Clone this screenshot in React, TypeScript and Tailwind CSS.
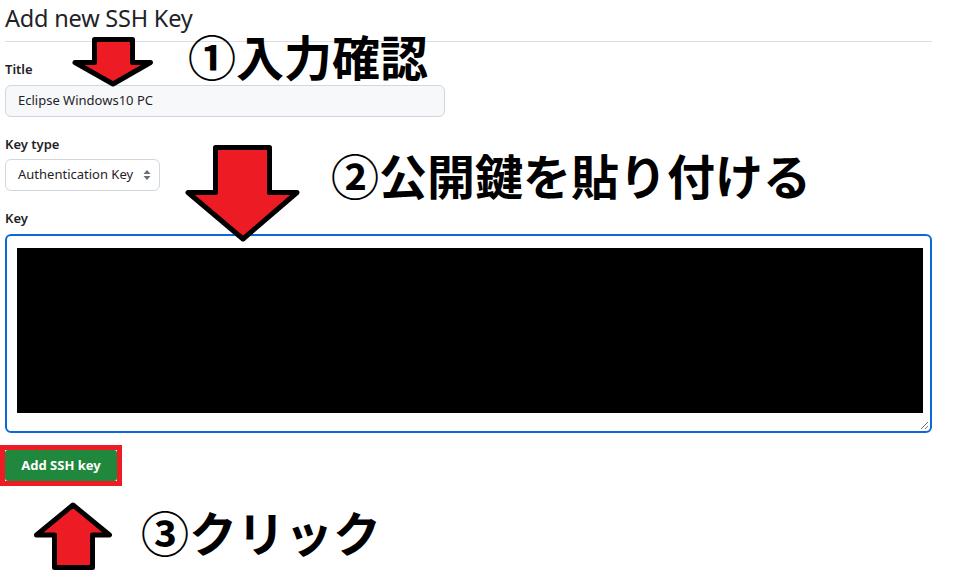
import React from "react";

function SortIcon() {
  return (
    <svg width="8" height="12" viewBox="0 0 8 12" className="ml-[10px]">
      <path d="M4 1 L7.5 5 H0.5 Z" fill="#656d76" />
      <path d="M4 11 L7.5 7 H0.5 Z" fill="#656d76" />
    </svg>
  );
}

function Arrows() {
  // 注釈の矢印 (ペイントで描いたような赤い矢印)
  return (
    <svg
      className="absolute inset-0 pointer-events-none"
      width="958"
      height="583"
      viewBox="0 0 958 583"
    >
      <g fill="#ed1c24" stroke="#000" strokeWidth="5" strokeLinejoin="round">
        <polygon points="94.5,39.5 132.5,39.5 132.5,62.5 150.5,62.5 113,84 75,62.5 94.5,62.5" />
        <polygon points="215.5,147.5 269.5,147.5 269.5,192.5 297,192.5 243,239 188,192.5 215.5,192.5" />
        <polygon points="73,505 109.5,535 92.5,535 92.5,567.5 54.5,567.5 54.5,535 36.5,535" />
      </g>
    </svg>
  );
}

const noteFont = { fontFamily: '"Noto Sans CJK JP", sans-serif' };

export default function App() {
  return (
    <div
      className="relative w-[958px] h-[583px] bg-white overflow-hidden text-[#1f2328]"
      style={{ fontFamily: '"Noto Sans", "Noto Sans CJK JP", sans-serif' }}
    >
      <div className="w-[927px] ml-[5px] flex flex-col">
        <h2 className="text-[23.5px] leading-[36px] font-normal pb-[5px] border-b border-[#d8dee4] tracking-[-0.2px]">
          Add new SSH Key
        </h2>

        <label className="mt-[17px] text-[13px] leading-[20px] font-semibold">Title</label>
        <div className="mt-[6px] w-[440px] h-[32px] rounded-[6px] border border-[#d0d7de] bg-[#f6f8fa] flex items-center px-[12px] text-[13px]">
          Eclipse Windows10 PC
        </div>

        <label className="mt-[17px] text-[13px] leading-[20px] font-semibold">Key type</label>
        <div className="mt-[5px] w-[155px] h-[32px] rounded-[6px] border border-[#d0d7de] bg-white flex items-center pl-[12px] text-[13px]">
          Authentication Key
          <SortIcon />
        </div>

        <label className="mt-[17px] text-[13px] leading-[20px] font-semibold">Key</label>
        <div className="relative mt-[6px] h-[199px] rounded-[6px] border-2 border-[#0969da] pt-[12px] pl-[10px] pr-[7px]">
          <div className="h-[165px] bg-black" />
          <svg className="absolute right-[1px] bottom-[1px]" width="10" height="10" viewBox="0 0 10 10">
            <path d="M9 2 L2 9 M9 6 L6 9" stroke="#777" strokeWidth="1" />
          </svg>
        </div>

        <div className="mt-[12px] -ml-[5px] self-start border-[5px] border-[#ed1c24]">
          <div className="w-[112px] h-[31px] rounded-[3px] bg-[#1f883d] flex items-center justify-center text-white text-[13px] font-bold">
            Add SSH key
          </div>
        </div>
      </div>

      <Arrows />

      <div className="absolute left-[188px] top-[31px] text-[48px] leading-none font-bold text-black whitespace-nowrap" style={noteFont}>
        ①入力確認
      </div>
      <div className="absolute left-[331px] top-[150px] text-[48px] leading-none font-bold text-black whitespace-nowrap" style={noteFont}>
        ②公開鍵を貼り付ける
      </div>
      <div className="absolute left-[141px] top-[507px] text-[48px] leading-none font-bold text-black whitespace-nowrap" style={noteFont}>
        ③クリック
      </div>
    </div>
  );
}
